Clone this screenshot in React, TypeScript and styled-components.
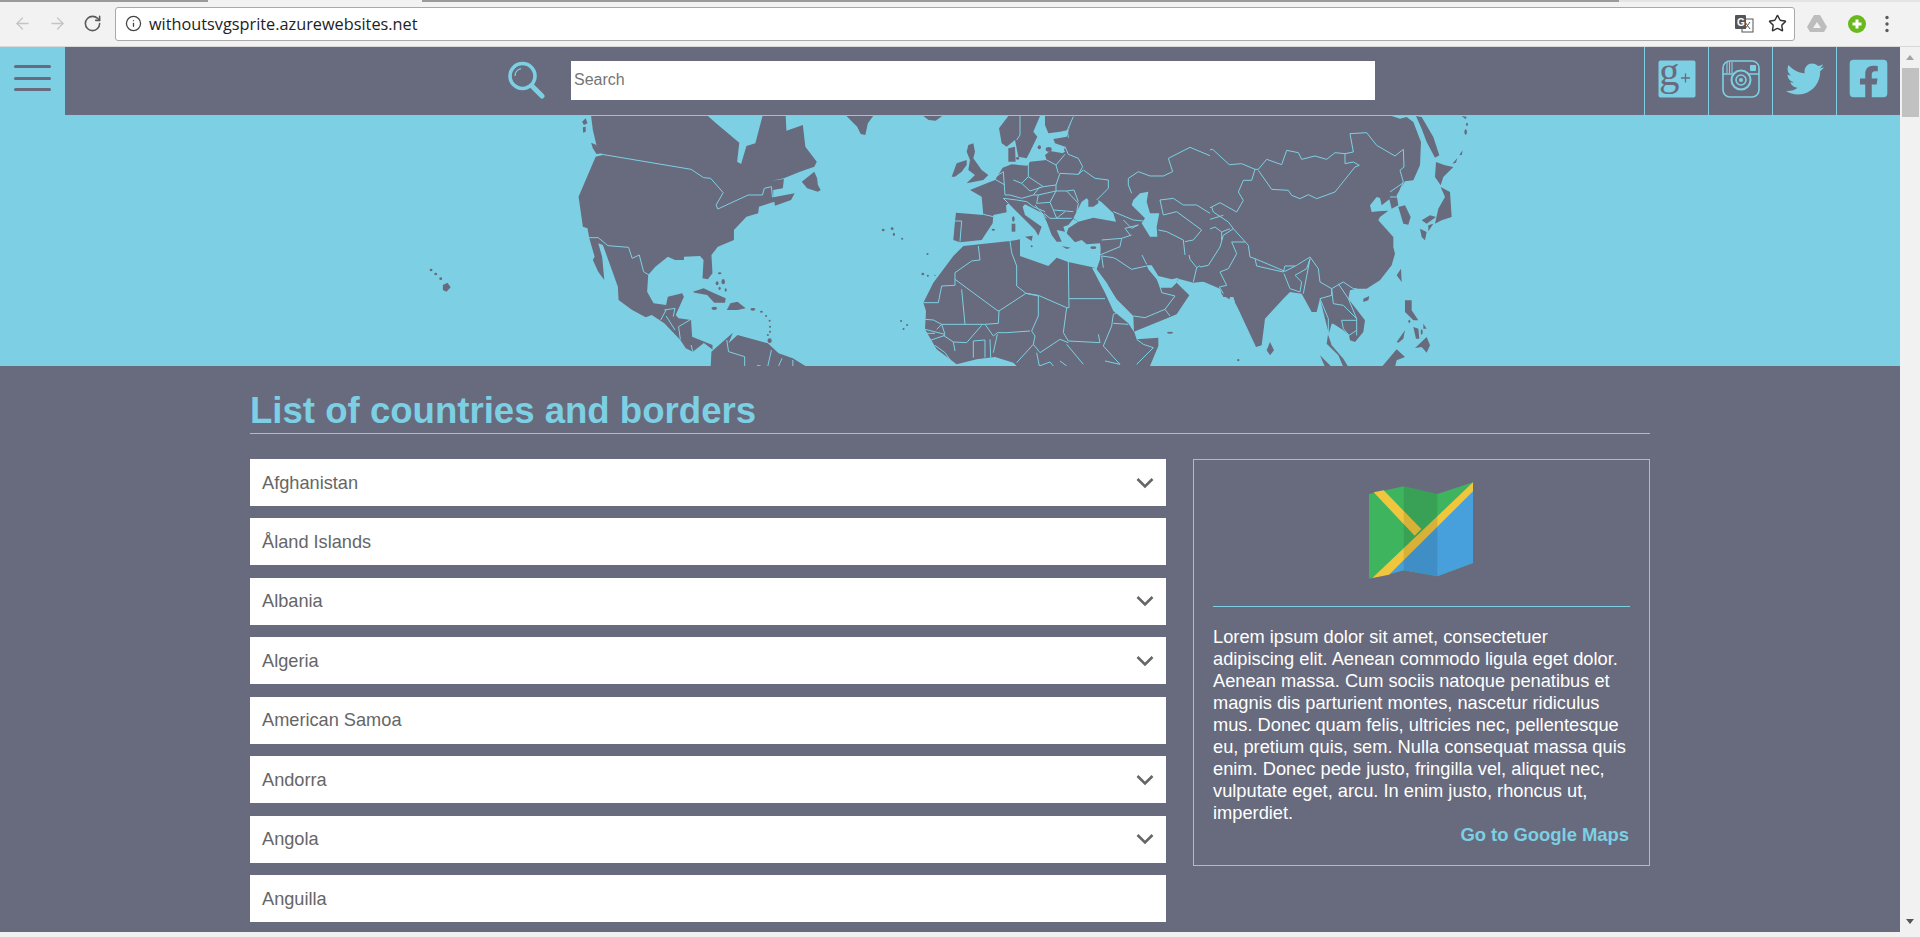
import React from "react";
import styled, { createGlobalStyle } from "styled-components";
import { ArrowLeft, ArrowRight, RotateCw, Info, Star } from "lucide-react";
import { FaTwitter, FaFacebookSquare } from "react-icons/fa";

const DARK = "#686b7e";
const LIGHT = "#7dd0e3";

const Global = createGlobalStyle`
  html, body { margin: 0; padding: 0; height: 100%; overflow: hidden; background: #f1f1f1; }
  * { box-sizing: border-box; }
  body { font-family: "Liberation Sans", Arial, sans-serif; }
`;

const Shell = styled.div`
  width: 1920px;
  height: 937px;
  display: flex;
  flex-direction: column;
  overflow: hidden;
`;

const TabStrip = styled.div`
  height: 2px;
  flex: none;
  background: linear-gradient(to right, #9a9a9a 0 208px, #f2f2f2 208px 422px, #9a9a9a 422px 1619px, #e4e4e4 1619px);
`;

const Toolbar = styled.div`
  height: 45px;
  flex: none;
  background: #f2f2f2;
  border-bottom: 1px solid #d8d8d8;
  display: flex;
  align-items: center;
  padding-bottom: 1px;
`;

const NavSlot = styled.div<{ $w: number; $faded?: boolean }>`
  width: ${(p) => p.$w}px;
  flex: none;
  display: flex;
  justify-content: center;
  align-items: center;
  color: ${(p) => (p.$faded ? "#c4c4c4" : "#5a5a5a")};
`;

const Address = styled.div`
  width: 1680px;
  height: 34px;
  flex: none;
  background: #fff;
  border: 1px solid #a9a9a9;
  border-radius: 3px;
  display: flex;
  align-items: center;
  padding: 0 7px 0 9px;
  gap: 7px;
`;

const Url = styled.span`
  flex: 1;
  font-family: "Open Sans", "Noto Sans", sans-serif;
  font-size: 16.3px;
  color: #222;
  white-space: nowrap;
`;

const StarSlot = styled.span`
  display: flex;
  margin-left: 7px;
  color: #333;
`;

const Body = styled.div`
  height: 885px;
  flex: none;
  display: flex;
`;

const BottomEdge = styled.div`
  height: 5px;
  flex: none;
  background: #f1f1f1;
`;

const Page = styled.div`
  width: 1900px;
  flex: none;
  overflow: hidden;
  background: ${DARK};
`;

const Scrollbar = styled.div`
  width: 20px;
  flex: none;
  background: #f1f1f1;
  display: flex;
  flex-direction: column;
  align-items: center;
`;

const ScrollArrow = styled.div<{ $down?: boolean }>`
  height: 21px;
  flex: none;
  width: 0;
  margin-top: ${(p) => (p.$down ? "auto" : "0")};
  display: flex;
  align-items: center;
  &::after {
    content: "";
    display: block;
    margin-left: -4px;
    border-left: 4px solid transparent;
    border-right: 4px solid transparent;
    ${(p) => (p.$down ? "border-top: 5px solid #555;" : "border-bottom: 5px solid #a3a3a3;")}
  }
`;

const Thumb = styled.div`
  width: 17px;
  height: 49px;
  background: #c1c1c1;
`;

const Header = styled.header`
  height: 68px;
  display: flex;
  align-items: stretch;
  background: ${DARK};
`;

const MenuBox = styled.div`
  width: 65px;
  flex: none;
  background: ${LIGHT};
  display: flex;
  flex-direction: column;
  justify-content: center;
  gap: 8.5px;
  padding: 0 14px 6px;
`;

const MenuBar = styled.span`
  display: block;
  height: 3px;
  border-radius: 2px;
  background: ${DARK};
`;

const SearchZone = styled.div`
  flex: 1;
  display: flex;
  align-items: center;
  padding: 0 0 2px 442px;
  gap: 26px;
`;

const SearchIconSlot = styled.span`
  display: flex;
  margin-bottom: 1px;
`;

const SearchInput = styled.input`
  width: 804px;
  height: 39px;
  border: 0;
  outline: 0;
  background: #fff;
  padding: 0 2px 0 3px;
  font-family: "Liberation Sans", Arial, sans-serif;
  font-size: 16px;
  color: #333;
  &::placeholder { color: #757575; opacity: 1; }
`;

const Social = styled.div`
  width: 64px;
  flex: none;
  border-left: 1px solid ${LIGHT};
  display: flex;
  align-items: center;
  justify-content: center;
  padding-bottom: 5px;
  color: ${LIGHT};
  svg { overflow: visible; }
`;

const MapBand = styled.div`
  height: 251px;
  background: ${LIGHT};
  overflow: hidden;
  svg { display: block; }
`;

const Content = styled.main`
  width: 1400px;
  margin: 0 auto;
`;

const Title = styled.h1`
  margin: 0 0 25px;
  height: 68px;
  padding-top: 26px;
  border-bottom: 1px solid ${LIGHT};
  font-size: 36.6px;
  line-height: 38px;
  font-weight: 700;
  color: ${LIGHT};
  white-space: nowrap;
`;

const Columns = styled.div`
  display: grid;
  grid-template-columns: 916px 457px;
  gap: 27px;
  align-items: start;
`;

const List = styled.div`
  display: flex;
  flex-direction: column;
  gap: 12.45px;
`;

const Row = styled.div`
  height: 47px;
  background: #fff;
  display: flex;
  align-items: center;
  justify-content: space-between;
  padding: 1px 12px 0;
  font-size: 18.2px;
  color: #666;
`;

const Chevron = styled.svg`
  width: 18px;
  height: 12px;
  flex: none;
  margin-top: -1px;
`;

const Card = styled.aside`
  height: 407px;
  border: 1px solid ${LIGHT};
  padding: 22px 19px 0;
  color: #fff;
`;

const MapIconWrap = styled.div`
  display: flex;
  justify-content: center;
  padding-right: 1px;
  height: 125px;
  border-bottom: 1px solid ${LIGHT};
  margin-bottom: 19px;
`;

const Lorem = styled.p`
  margin: 0;
  font-size: 18.25px;
  line-height: 22px;
  white-space: nowrap;
`;

const MapsLink = styled.a`
  display: block;
  text-align: right;
  padding-right: 1px;
  font-size: 18.4px;
  line-height: 22px;
  font-weight: 700;
  color: ${LIGHT};
`;

/* ---------- drawings ---------- */

const Land = styled.path`
  fill: ${DARK};
  stroke: none;
`;
const Water = styled.path`
  fill: ${LIGHT};
  stroke: none;
`;
const Border = styled.path`
  fill: none;
  stroke: ${LIGHT};
  stroke-width: 1px;
  stroke-linejoin: round;
`;

const Group = ({ t, land = [], water = [], borders = [] }: { t: string; land?: string[]; water?: string[]; borders?: string[] }) => (
  <g transform={t}>
    {land.map((d, i) => <Land key={"l" + i} d={d} />)}
    {water.map((d, i) => <Water key={"w" + i} d={d} />)}
    {borders.map((d, i) => <Border key={"b" + i} d={d} vectorEffect="non-scaling-stroke" />)}
  </g>
);

const dot = (x: number, y: number, r = 4, ry = r) =>
  `M${x - r},${y} a${r},${ry} 0 1,0 ${2 * r},0 a${r},${ry} 0 1,0 ${-2 * r},0 Z`;

const americas = [
  "M535,18 L862,18 L885,40 L950,98 L944,155 L955,162 L970,108 L995,100 L1015,18 L1080,18 L1082,62 L1128,45 L1135,110 L1167,155 L1160,170 L1120,185 L1075,205 L1040,212 L1075,207 L1072,235 L1045,240 L1045,262 L1105,250 L1095,270 L1050,287 L1048,275 L1005,290 L1003,310 L970,320 L935,360 L935,390 L890,410 L872,435 L875,490 L862,508 L847,505 L850,450 L840,438 L795,440 L795,450 L770,450 L750,440 L715,470 L695,495 L692,545 L710,580 L745,585 L750,560 L790,550 L795,560 L772,615 L780,625 L815,630 L818,680 L875,705 L875,720 L850,700 L820,725 L800,715 L785,690 L740,640 L705,615 L688,622 L650,600 L612,570 L610,530 L590,470 L568,405 L555,400 L566,440 L572,510 L555,485 L540,450 L545,440 L530,385 L525,355 L512,350 L500,260 L540,160 L548,140 L567,135 L550,105 L540,60 Z",
  "M535,98 L550,105 L567,130 L550,132 L540,115 Z",
  "M510,35 L520,25 L525,40 L515,45 Z",
  "M512,52 L520,50 L520,65 L513,68 Z",
  "M1125,215 L1160,185 L1168,205 L1170,225 L1178,240 L1170,245 L1140,235 Z",
  "M870,768 L872,725 L932,668 L920,700 L945,675 L1030,700 L1060,730 L1100,745 L1135,768 Z",
  "M820,545 L850,535 L880,550 L912,565 L910,578 L880,578 L860,555 L825,548 Z",
  "M915,600 L925,580 L945,575 L968,595 L945,600 L925,600 Z",
  "M1250,18 L1325,18 L1310,40 L1303,75 L1290,72 L1280,50 Z",
  "M1465,18 L1518,18 L1500,32 L1480,30 Z",
  dot(880, 595, 8, 5), dot(988, 598, 7, 4),
  dot(895, 490, 5, 3), dot(905, 515, 5, 8), dot(888, 520, 4, 6), dot(895, 535, 3, 5), dot(912, 540, 3, 5),
  dot(1012, 605, 4, 3), dot(1025, 618, 3), dot(1035, 632, 3), dot(1036, 650, 3), dot(1036, 665, 3), dot(1030, 675, 3), dot(1035, 692, 6, 7),
  dot(87, 480, 4), dot(100, 492, 4), dot(114, 506, 4), "M120,525 L133,518 L142,532 L130,545 L120,540 Z",
  dot(1353, 360, 4), dot(1378, 356, 4), dot(1383, 373, 3, 5), dot(1406, 386, 3), dot(1477, 432, 3),
  dot(1464, 492, 4), dot(1478, 497, 3), dot(1498, 496, 2),
  dot(1403, 633, 3), dot(1420, 645, 3), dot(1410, 657, 3),
];
const americaBorders = [
  "M565,133 L815,178 L850,203 L870,205 L905,248 L885,285 L890,297 L975,255 L1015,255 L1020,235 L1040,230 L1043,262",
  "M527,383 L555,383 L582,407 L640,412 L650,445 L670,435 L682,485 L697,495",
  "M740,600 L770,595 L765,620",
  "M730,630 L745,600 M745,618 L770,660 M780,650 L815,628 M780,650 L785,688 M815,705 L820,725 M850,700 L875,720",
  "M915,690 L920,725 L965,740 L965,768 M1040,720 L1030,768 M1070,745 L1060,768 M1100,750 L1100,768 M1000,766 L1010,768",
];

const europeLand = [
  "M175,3 L270,3 L250,50 L262,65 L240,110 L230,130 L205,125 L195,75 L170,95 L155,85 L147,40 Z",
  "M285,3 L372,3 L355,45 L330,50 L295,55 L285,30 Z",
  "M370,3 L780,3 L780,420 L455,420 L450,385 L410,388 L395,375 L375,382 L350,355 L355,340 L385,320 L370,312 L355,330 L340,335 L345,350 L320,345 L335,380 L320,380 L305,360 L290,320 L278,295 L225,268 L218,275 L225,300 L275,335 L265,362 L255,345 L235,325 L195,285 L175,265 L168,272 L170,292 L130,300 L128,325 L95,375 L30,382 L10,375 L15,318 L18,293 L100,300 L95,245 L60,225 L110,205 L135,195 L158,158 L185,148 L232,152 L240,140 L290,135 L285,120 L300,108 L340,115 L345,95 L315,85 L310,72 L350,65 Z",
  "M175,100 L195,95 L197,140 L175,140 Z",
  "M55,90 L70,85 L75,110 L70,130 L95,165 L115,180 L100,195 L50,205 L75,180 L55,165 L60,135 L50,110 Z",
  "M5,185 L20,145 L50,135 L50,150 L35,170 L15,185 Z",
  dot(268, 97, 5, 6), dot(296, 103, 9, 7), dot(203, 130, 5, 4),
  dot(190, 312, 4, 8), "M185,326 L196,326 L196,350 L185,350 Z", "M225,365 L248,362 L245,378 Z", dot(130, 344, 5, 3),
  dot(245, 394, 3), "M335,393 L362,398 L350,402 Z", dot(430, 398, 9, 4),
];
const europeWater = [
  "M375,300 L395,260 L410,250 L415,255 L415,275 L430,275 L445,265 L445,255 L455,262 L490,295 L498,320 L430,308 L385,320 L370,310 Z",
  "M550,255 L570,235 L595,230 L590,260 L600,295 L628,295 L620,335 L622,365 L600,365 L575,325 L585,310 L545,270 Z",
];
const europeBorders = [
  "M370,5 L352,45 L355,68",
  "M210,3 L210,60 L200,75",
  "M310,105 L345,110 M345,95 L355,118 L385,130 L398,155 L385,178 L330,175 L318,210",
  "M345,118 L318,150 L325,175 M290,135 L318,150 M235,140 L235,185 L280,215 L318,210",
  "M385,178 L400,165 L435,190 L475,195 L475,220 L455,240 L440,255",
  "M318,228 L350,228 L385,265 L380,290 M318,210 L318,228 L300,262 L310,285 L370,290",
  "M350,228 L372,225 L385,260",
  "M310,285 L320,310 L365,310 M320,310 L345,290 M282,295 L300,310 L320,310",
  "M160,170 L165,240 L180,240 M160,170 L130,190 L165,210 M235,185 L215,205 L240,228 L280,215",
  "M180,240 L215,250 L250,240 L270,215 M250,240 L265,240 L318,228 M265,240 L260,265 L300,262",
  "M160,250 L200,255 L230,260 M160,250 L175,265 M230,260 L250,275 L285,290 M255,270 L290,310 M100,298 L130,305",
  "M15,318 L35,318 L30,380",
  "M490,290 L550,315 L580,318 M520,315 L545,340 L565,330 L525,340 L540,360",
  "M455,375 L515,370 L545,360 M515,370 L510,395 L450,420",
  "M625,345 L650,350 L700,375 L705,420",
  "M630,255 L640,300 L680,290 L755,345 L730,375 L705,380",
  "M630,255 L670,250 L700,270 L740,270 L780,295",
  "M545,235 L535,210 L535,190 L565,170 L600,183 L640,183 L668,170 L655,130 L720,97 L780,122",
  "M190,195 L215,205",
];

const africaLand = [
  "M10,200 L40,140 L100,60 L130,30 L270,15 L300,10 L300,60 L385,90 L410,65 L445,78 L525,95 L585,195 L640,280 L650,310 L715,305 L715,330 L690,390 L290,390 L280,380 L225,363 L170,370 L110,385 L50,340 L15,280 L18,225 Z",
  "M545,0 L990,0 L990,270 L945,200 L950,180 L935,170 L928,190 L905,175 L900,150 L868,135 L820,140 L775,128 L770,140 L808,178 L770,235 L745,245 L640,288 L628,258 L595,200 L560,140 L530,100 L540,70 Z",
  dot(750, 290, 9, 3), dot(955, 372, 3),
];
const africaWater = [
  "M680,88 L695,88 L715,120 L755,130 L775,125 L770,140 L755,155 L720,155 L710,130 L685,100 Z",
  "M516,95 L526,95 L590,190 L640,240 L642,288 L625,262 L580,225 L555,170 Z",
];
const africaBorders = [
  "M10,200 L55,200 L65,150 L105,148 L105,110 L155,75 L180,72 L175,30",
  "M270,15 L275,50 L290,90 L290,150 L318,172",
  "M105,130 L230,222 L237,225 L318,172 L355,180 L355,240 L335,285 L345,300 L340,325 L360,350",
  "M318,172 L355,178 L440,215 M445,75 L447,215 L440,215 M447,188 L555,188",
  "M440,215 L430,290 L445,315 L540,320 L535,295 M550,330 L575,270 L580,235 L590,230 M580,262 L625,265",
  "M550,330 L600,385 M650,310 L670,325 L700,335 L650,385",
  "M125,160 L135,265 L65,265 L50,280 M15,250 L40,252 L65,265 L75,295 L15,280 M15,292 L45,292",
  "M135,265 L195,265 L235,262 L237,225 M195,265 L220,300 L232,290 L260,290 L330,285",
  "M140,320 L185,268 M140,320 L100,318 L105,345 M70,298 L100,318 M25,315 L75,298 M45,328 L75,350 L100,385",
  "M160,315 L195,312 L195,365 M160,315 L160,365 M210,310 L212,365 M232,295 L220,350",
  "M340,325 L290,380 M360,350 L420,310 L445,320 M350,350 L358,390 L390,378 L400,390",
  "M440,325 L490,385 M420,375 L440,390 M555,375 L600,385",
  "M545,60 L580,65 L590,70 L635,100 L680,90 M550,35 L610,10 M545,60 L550,95",
  "M640,240 L675,245 L735,220 L750,240 M735,220 L765,180 L725,170 L720,150",
  "M640,5 L680,85 M795,0 L810,70 L830,95 L820,138",
  "M830,95 L890,60 L910,0 M895,150 L915,150 L900,105 L925,100 L950,50 L935,15 L955,15 L990,50",
];

const asiaLand = [
  "M0,12 L575,12 L600,20 L620,15 L640,30 L663,90 L660,160 L640,205 L615,208 L590,250 L595,280 L575,290 L568,262 L545,280 L540,258 L530,255 L510,280 L515,300 L535,298 L565,296 L540,315 L535,325 L580,375 L580,405 L585,425 L575,460 L540,505 L500,530 L470,530 L450,535 L445,560 L495,625 L490,660 L465,690 L450,685 L447,670 L430,655 L400,635 L395,635 L385,670 L395,700 L430,740 L445,765 L430,765 L415,730 L380,695 L385,660 L360,560 L350,600 L335,600 L305,545 L270,540 L250,560 L195,620 L185,700 L168,705 L105,570 L100,555 L70,555 L60,530 L0,505 Z",
  "M595,285 L615,280 L632,315 L625,338 L610,335 Z",
  "M722,225 L750,240 L755,315 L725,325 L705,335 L715,290 L735,255 Z",
  "M660,350 L680,360 L675,385 L665,375 Z",
  "M685,340 L700,335 L685,358 Z",
  "M665,325 L690,310 L708,315 L680,335 Z",
  "M708,150 L735,160 L760,165 L730,195 L722,220 L705,195 Z",
  "M648,12 L665,15 L700,75 L718,130 L705,137 L680,90 L665,50 Z",
  "M785,12 L800,14 L797,22 Z", dot(801, 37, 3, 5), dot(797, 60, 4, 8), "M778,128 L788,115 L785,130 Z", "M757,155 L772,138 L768,152 Z",
  "M603,470 L605,510 L590,490 Z",
  "M490,560 L508,552 L505,565 L490,570 Z",
  "M210,690 L222,715 L210,730 L200,715 Z",
  "M615,565 L635,565 L635,595 L655,625 L640,625 L615,600 Z",
  "M645,708 L680,675 L690,700 L680,722 L665,705 Z",
  dot(628, 628, 3, 5), "M640,645 L655,650 L658,680 L648,680 Z", "M670,635 L680,650 L670,650 Z", dot(665, 660, 3, 8),
  "M590,690 L615,655 L610,680 L595,692 Z",
  "M545,765 L590,712 L615,735 L590,745 L585,765 Z",
  "M360,730 L395,765 L375,765 Z",
  dot(115, 745, 3),
];
const asiaBorders = [
  "M0,120 L38,112 L88,158 L125,155 L165,172 L175,172",
  "M175,172 L200,142 L245,158 L260,115 L295,122 L305,142 L345,132 L380,142 L405,122 L435,125 L460,120 L450,65 L500,62 L530,100 L585,132 L610,112 L612,165 L600,175 L610,210 L600,235",
  "M175,175 L215,232 L265,235 L275,250 L300,260 L325,248 L350,260 L405,240 L465,165 L478,160 L460,150 L435,155 L435,125",
  "M165,172 L155,205 L130,205 L115,240 L130,265 L110,300 L60,272 L35,285 L0,300",
  "M35,285 L40,300 L85,330 L100,350 L145,400 L150,435 L165,440 L255,478 L290,460 L330,435 L355,470 L360,510 L395,530 L430,510 L460,530 L470,530",
  "M165,440 L170,462 L250,480 L255,462 L285,462",
  "M252,485 L270,530 L300,540 L305,510 L285,490 L320,470 L330,440 M330,440 L310,545",
  "M360,560 L395,550 L395,530 M360,560 L385,620 L385,670",
  "M395,530 L400,575 L430,580 L470,620 M415,515 L445,560 L470,620 L470,670",
  "M425,625 L470,625 M425,625 L430,650 L447,670 L470,655",
  "M100,350 L70,370 L60,405 L25,460 L0,465",
  "M95,390 L110,425 L85,470 L60,480 L80,520 L58,525 L70,545 M95,390 L135,390",
  "M570,240 L610,212 M570,255 L600,255",
  "M0,310 L20,325 L70,310 M15,320 L20,355 L45,345 L65,360 L90,350 M65,360 L65,385",
];

const WorldMap = () => (
  <svg width="1900" height="251" viewBox="0 0 1900 251" aria-hidden="true">
    <Group t="translate(400,-5) scale(0.35714,0.33333)" land={americas} borders={americaBorders} />
    <Group t="translate(920,121) scale(0.33333)" land={africaLand} water={africaWater} borders={africaBorders} />
    <Group t="translate(1200,-3) scale(0.33333)" land={asiaLand} borders={asiaBorders} />
    <Group t="translate(950,0) scale(0.33333)" land={europeLand} water={europeWater} borders={europeBorders} />
  </svg>
);

const SearchGlyph = () => (
  <svg width="38" height="38" viewBox="0 0 38 38" aria-hidden="true">
    <circle cx="15.5" cy="15" r="12.5" fill="none" stroke={LIGHT} strokeWidth="3.6" />
    <path d="M8 15 a7.5 7.5 0 0 1 6-7.3" fill="none" stroke={LIGHT} strokeWidth="1.3" />
    <path d="M25 25 L35 35" stroke={LIGHT} strokeWidth="5" strokeLinecap="round" />
  </svg>
);

const GooglePlus = () => (
  <svg width="38" height="38" viewBox="0 0 38 38" aria-hidden="true">
    <rect x="0.5" y="0.5" width="37" height="37" rx="2" fill={LIGHT} />
    <text x="1" y="25" fontFamily="Liberation Serif, serif" fontSize="41" fill={DARK}>g</text>
    <path d="M23 18h9M27.5 13.5v9" stroke={DARK} strokeWidth="1.3" />
  </svg>
);

const Instagram = () => (
  <svg width="38" height="38" viewBox="0 0 38 38" fill="none" stroke={LIGHT} aria-hidden="true">
    <rect x="1" y="1" width="36" height="36" rx="7" strokeWidth="1.6" />
    <path d="M1 14 H12 M26 14 H37" strokeWidth="1.4" />
    <path d="M5 2v11M7.5 2v11M10 2v11" strokeWidth="1.1" />
    <rect x="28" y="5" width="6" height="6" rx="1" fill={LIGHT} stroke="none" />
    <circle cx="19" cy="20" r="9.5" strokeWidth="2" />
    <circle cx="19" cy="20" r="5" strokeWidth="1.6" />
    <circle cx="19" cy="20" r="2" fill={LIGHT} stroke="none" />
  </svg>
);

const FoldedMap = () => (
  <svg width="104" height="97" viewBox="568 98 312 289" aria-hidden="true">
    <path d="M568 133 L672 110 L773 133 L880 98 V340 L773 380 L672 362 L568 387 Z" fill="#3fb45f" />
    <path d="M880 125 V340 L773 380 L672 362 L625 375 Z" fill="#479fdc" />
    <path d="M880 98 V125 L628 375 L578 385 Z" fill="#f0c63f" />
    <path d="M582 128 L612 122 L725 238 L705 258 Z" fill="#f0c63f" />
    <path d="M672 110 L773 133 V380 L672 362 Z" fill="#000" fillOpacity="0.1" />
  </svg>
);

const RowChevron = () => (
  <Chevron viewBox="0 0 18 12" aria-hidden="true">
    <path d="M1.5 2 L9 9.5 L16.5 2" fill="none" stroke="#666" strokeWidth="2.6" />
  </Chevron>
);

const TranslateIcon = () => (
  <svg width="20" height="20" viewBox="0 0 20 20" aria-hidden="true">
    <rect x="8" y="5" width="11" height="13" fill="#fff" stroke="#555" />
    <path d="M11 8l5 7M16 8l-5 7" stroke="#555" strokeWidth="1" />
    <rect x="1" y="1" width="11" height="14" rx="1" fill="#555" />
    <text x="3" y="12" fontFamily="Liberation Sans, sans-serif" fontSize="10" fontWeight="700" fill="#fff">G</text>
  </svg>
);

const DriveIcon = () => (
  <svg width="22" height="20" viewBox="0 0 22 20" aria-hidden="true">
    <path d="M8 1 H14 L21 13 L18 18 H4 L1 13 Z" fill="#bdbdbd" />
    <path d="M11 8 L15 14 H7 Z" fill="#f2f2f2" />
  </svg>
);

const PlusIcon = () => (
  <svg width="20" height="20" viewBox="0 0 20 20" aria-hidden="true">
    <circle cx="10" cy="10" r="9" fill="#69b91c" />
    <path d="M10 5.5v9M5.5 10h9" stroke="#fff" strokeWidth="3" />
  </svg>
);

const Dots = () => (
  <svg width="4" height="18" viewBox="0 0 4 18" aria-hidden="true">
    <circle cx="2" cy="2.5" r="1.7" fill="#5a5a5a" />
    <circle cx="2" cy="9" r="1.7" fill="#5a5a5a" />
    <circle cx="2" cy="15.5" r="1.7" fill="#5a5a5a" />
  </svg>
);

const rows: [string, boolean][] = [
  ["Afghanistan", true],
  ["Åland Islands", false],
  ["Albania", true],
  ["Algeria", true],
  ["American Samoa", false],
  ["Andorra", true],
  ["Angola", true],
  ["Anguilla", false],
];

const loremLines = [
  "Lorem ipsum dolor sit amet, consectetuer",
  "adipiscing elit. Aenean commodo ligula eget dolor.",
  "Aenean massa. Cum sociis natoque penatibus et",
  "magnis dis parturient montes, nascetur ridiculus",
  "mus. Donec quam felis, ultricies nec, pellentesque",
  "eu, pretium quis, sem. Nulla consequat massa quis",
  "enim. Donec pede justo, fringilla vel, aliquet nec,",
  "vulputate eget, arcu. In enim justo, rhoncus ut,",
  "imperdiet.",
];

export default function App() {
  return (
    <Shell>
      <Global />
      <TabStrip />
      <Toolbar>
        <NavSlot $w={45} $faded><ArrowLeft size={19} strokeWidth={1.6} /></NavSlot>
        <NavSlot $w={25} $faded><ArrowRight size={19} strokeWidth={1.6} /></NavSlot>
        <NavSlot $w={45}><RotateCw size={19} strokeWidth={2} /></NavSlot>
        <Address>
          <Info size={17} strokeWidth={1.8} color="#444" />
          <Url>withoutsvgsprite.azurewebsites.net</Url>
          <TranslateIcon />
          <StarSlot><Star size={19} strokeWidth={1.8} /></StarSlot>
        </Address>
        <NavSlot $w={44}><DriveIcon /></NavSlot>
        <NavSlot $w={36}><PlusIcon /></NavSlot>
        <NavSlot $w={24}><Dots /></NavSlot>
      </Toolbar>
      <Body>
        <Page>
          <Header>
            <MenuBox>
              <MenuBar />
              <MenuBar />
              <MenuBar />
            </MenuBox>
            <SearchZone>
              <SearchIconSlot><SearchGlyph /></SearchIconSlot>
              <SearchInput placeholder="Search" />
            </SearchZone>
            <Social><GooglePlus /></Social>
            <Social><Instagram /></Social>
            <Social><FaTwitter size={38} /></Social>
            <Social><FaFacebookSquare size={43} /></Social>
          </Header>
          <MapBand><WorldMap /></MapBand>
          <Content>
            <Title>List of countries and borders</Title>
            <Columns>
              <List>
                {rows.map(([name, open]) => (
                  <Row key={name}>
                    {name}
                    {open && <RowChevron />}
                  </Row>
                ))}
              </List>
              <Card>
                <MapIconWrap><FoldedMap /></MapIconWrap>
                <Lorem>
                  {loremLines.map((line) => (
                    <React.Fragment key={line}>
                      {line}
                      <br />
                    </React.Fragment>
                  ))}
                </Lorem>
                <MapsLink>Go to Google Maps</MapsLink>
              </Card>
            </Columns>
          </Content>
        </Page>
        <Scrollbar>
          <ScrollArrow />
          <Thumb />
          <ScrollArrow $down />
        </Scrollbar>
      </Body>
      <BottomEdge />
    </Shell>
  );
}
